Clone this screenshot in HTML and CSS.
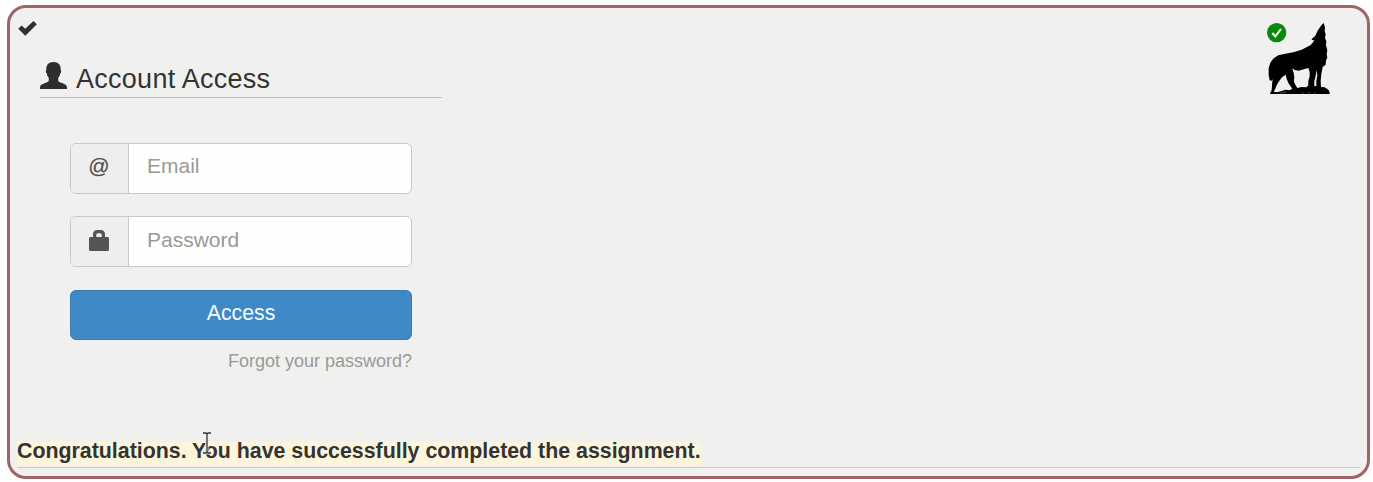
FILE: index.html
```html
<!DOCTYPE html>
<html lang="en">
<head>
<meta charset="utf-8">
<title>Account Access</title>
<link rel="stylesheet" href="styles.css">
</head>
<body>
<main class="panel">
  <div class="top">
    <div class="left">
      <svg class="check" viewBox="0 0 18 14"><path d="M.2 7.2 3.400 4.100 6.800 7.200 14.600 0 17.900 3 6.900 13.900Z"/></svg>
      <section class="account">
        <h1 class="title">
          <svg class="user" viewBox="0 0 27 27"><path d="M13.500 0c4.900 0 7.500 2.700 7.200 8 .9.600.5 3-.5 3.600-.3 2-1 3.300-2 4.400v2c0 2 1.400 2.100 4.400 3.200 3.200 1.200 4.400 2.200 4.400 4.300V27H0v-1.500c0-2.100 1.200-3.100 4.400-4.300 3-1.100 4.400-1.200 4.400-3.200v-2c-1-1.100-1.700-2.400-2-4.400-1-.6-1.400-3-.5-3.600C6 2.700 8.600 0 13.500 0Z"/></svg>
          <span>Account Access</span>
        </h1>
        <form class="form">
          <div class="group">
            <span class="addon"><span class="at">@</span></span>
            <input class="field" type="text" placeholder="Email">
          </div>
          <div class="group">
            <span class="addon"><svg class="lock" viewBox="0 0 20 21"><path fill-rule="evenodd" d="M4 7V4.500C4 1.500 5.500 0 8.500 0h3C14.500 0 16 1.500 16 4.500V7h2.500Q20 7 20 8.500v11q0 1.500-1.500 1.500h-17Q0 21 0 19.500v-11Q0 7 1.500 7Zm3.300 0h5.400V4.700q0-1.500-1.500-1.500H8.800q-1.500 0-1.500 1.500Z"/></svg></span>
            <input class="field low" type="password" placeholder="Password">
          </div>
          <button class="submit" type="button">Access</button>
          <a class="forgot">Forgot your password?</a>
        </form>
      </section>
    </div>
    <svg class="wolf" viewBox="0 0 225 252">
      <circle class="badge" cx="44" cy="53" r="29"/>
      <path class="tick" d="M31 54 40 64 57 42"/>
      <path d="M185 24 189 37 188 48 191 58 189 68 193 79 192 91 196 106 194 117 196 127 192 137 191 149 182 156 178 177 176 198 177 216 188 217 199 224 203 232 203 237H24L26 231 29 226 31 198 36 185 34 191 29 197 23 196 20 181 20 160 25 143 35 130 49 121 70 116 94 112 119 104 145 91 153 82 157 76 149 75 150 71 160 62 166 49 178 31Z"/>
      <path class="gap" d="M91 160 98 165 110 167 128 162 139 159 143 171 143 184 139 199 139 211 133 217 118 216 106 219 101 211 96 201 96 194 97 187 95 174ZM71 179 74 191 79 204 91 221 82 226 71 224 59 228 46 232 35 230 40 221 43 212 50 200 60 187ZM164 165 161 182 157 198 157 214 163 213 163 197 166 181Z"/>
      <path class="rock" d="M55 235 74 230M119 232 125 236M139 234 145 232M155 235 160 233"/>
    </svg>
  </div>
  <p class="message"><span class="highlight">Congratulations. You have successfully completed the assignment.</span></p>
  <svg class="cursor" viewBox="0 0 10 24"><path class="halo" d="M1 2H4L5 3 6 2H9M5 3V21M1 22H4L5 21 6 22H9"/><path class="stem" d="M1 2H4L5 3 6 2H9M5 3V21M1 22H4L5 21 6 22H9"/></svg>
</main>
</body>
</html>
```

FILE: styles.css
```css
* { box-sizing: border-box; }
body {
  margin: 0;
  padding: 5px 3px 0 7px;
  height: 482px;
  overflow: hidden;
  background: #fefefe;
  color: #333;
  font-family: "Liberation Sans", Arial, sans-serif;
}
.panel {
  position: relative;
  height: 474px;
  padding: 7px 7px 0;
  border: 3px solid #a06466;
  border-radius: 19px;
  background: #f0f0ee;
}
.top { display: flex; justify-content: space-between; height: 421px; }
.left { padding-left: 1px; }
.check { display: block; width: 19px; height: 15px; margin-top: 6px; fill: #2e3033; }
.account { width: 402px; margin: 26px 0 0 22px; }
.title {
  display: flex;
  gap: 9px;
  height: 36px;
  margin: 0;
  border-bottom: 1px solid #c2c2c0;
  font-size: 27px;
  font-weight: 400;
  letter-spacing: 0.27px;
  line-height: 34px;
}
.user { width: 27px; height: 27px; fill: #2d2d2d; }
.form { display: flex; flex-direction: column; padding: 45px 30px 0; }
.group {
  display: flex;
  height: 51px;
  margin-bottom: 22px;
  overflow: hidden;
  border: 1px solid #c8c8c6;
  border-radius: 6px;
  background: #fefefd;
}
.addon {
  display: flex;
  align-items: center;
  justify-content: center;
  width: 58px;
  padding: 0 1px 3px 0;
  border-right: 1px solid #c8c8c6;
  background: #eeeeec;
  color: #505050;
  font-size: 21px;
}
.at { padding-bottom: 2px; -webkit-text-stroke: 0.2px #505050; }
.lock { width: 20px; height: 21px; fill: #555; }
.field {
  flex: 1;
  min-width: 0;
  padding: 0 18px 5px;
  border: 0;
  background: transparent;
  font: 21px "Liberation Sans", Arial, sans-serif;
}
.low { padding-bottom: 3px; }
.field::placeholder { color: #999; }
.submit {
  height: 50px;
  margin-top: 1px;
  padding: 0 0 4px;
  border: 1px solid #397cb5;
  border-radius: 6px;
  background: #4089c7;
  color: #f5fbff;
  font: 21.3px "Liberation Sans", Arial, sans-serif;
}
.forgot { margin-top: 10px; color: #999; font-size: 18px; line-height: 22px; text-align: right; }
.wolf { width: 75px; height: 84px; margin: 0 23px 0 0; }
.badge { fill: #07890b; }
.tick { fill: none; stroke: #fff; stroke-width: 6; }
.gap { fill: #f0f0ee; }
.rock { fill: none; stroke: #777; stroke-width: 2; }
.message {
  height: 32px;
  margin: 0;
  padding-top: 4px;
  border-bottom: 1px solid #ccc;
  font-size: 21.35px;
  font-weight: 700;
  line-height: 22px;
}
.highlight { display: inline-block; height: 23px; line-height: 18px; background: #fcf5dc; }
.cursor { position: absolute; left: 192px; top: 423px; width: 10px; height: 24px; fill: none; }
.halo { stroke: #eee; stroke-width: 3; }
.stem { stroke: #333; stroke-width: 1.3; }
```
